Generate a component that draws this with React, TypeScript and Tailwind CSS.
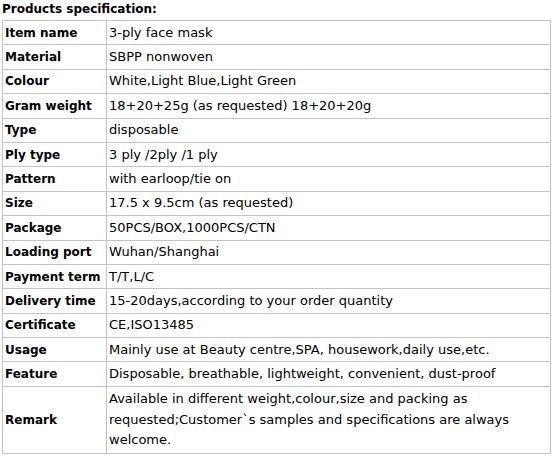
import React from "react";

const rows: [string, string][] = [
  ["Item name", "3-ply face mask"],
  ["Material", "SBPP nonwoven"],
  ["Colour", "White,Light Blue,Light Green"],
  ["Gram weight", "18+20+25g (as requested) 18+20+20g"],
  ["Type", "disposable"],
  ["Ply type", "3 ply /2ply /1 ply"],
  ["Pattern", "with earloop/tie on"],
  ["Size", "17.5 x 9.5cm (as requested)"],
  ["Package", "50PCS/BOX,1000PCS/CTN"],
  ["Loading port", "Wuhan/Shanghai"],
  ["Payment term", "T/T,L/C"],
  ["Delivery time", "15-20days,according to your order quantity"],
  ["Certificate", "CE,ISO13485"],
  ["Usage", "Mainly use at Beauty centre,SPA, housework,daily use,etc."],
  ["Feature", "Disposable, breathable, lightweight, convenient, dust-proof"],
];

export default function App() {
  return (
    <div
      className="w-[555px] h-[457px] bg-white text-black overflow-hidden"
      style={{ fontFamily: '"Comic Sans MS", "DejaVu Sans", sans-serif' }}
    >
      <div className="h-[20px] pl-[2px] pt-[1px] text-[12px] font-bold leading-[17px]">
        Products specification:
      </div>
      <table className="ml-[2px] w-[549px] table-fixed border-collapse text-[13px]">
        <colgroup>
          <col className="w-[104px]" />
          <col />
        </colgroup>
        <tbody>
          {rows.map(([k, v]) => (
            <tr key={k} className="h-[24.4px]">
              <td className="border border-[#c4c4c4] px-[2px] py-0 text-[12px] font-bold whitespace-nowrap overflow-hidden align-middle leading-[20px]">
                {k}
              </td>
              <td className="border border-[#c4c4c4] px-[2px] py-0 whitespace-nowrap overflow-hidden align-middle leading-[20px]">
                {v}
              </td>
            </tr>
          ))}
          <tr className="h-[67px]">
            <td className="border border-[#c4c4c4] px-[2px] py-0 text-[12px] font-bold align-middle leading-[20px]">
              Remark
            </td>
            <td className="border border-[#c4c4c4] pl-[2px] pr-[6px] py-0 align-middle leading-[20.5px]">
              Available in different weight,colour,size and packing as requested;Customer`s samples and specifications are always welcome.
            </td>
          </tr>
        </tbody>
      </table>
    </div>
  );
}
